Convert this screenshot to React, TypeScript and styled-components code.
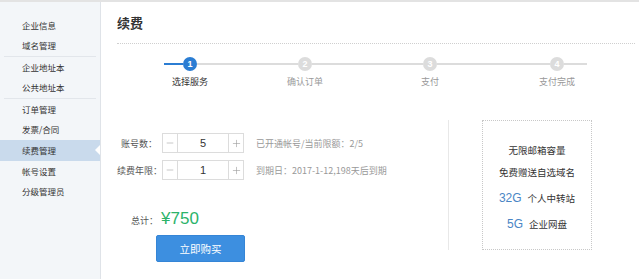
import { Fragment } from "react"
import styled, { createGlobalStyle } from "styled-components"
import { Minus, Plus } from "lucide-react"

const GlobalStyle = createGlobalStyle`
   body {
      margin: 0;
      background: #fff;
      color: #333;
      font-family: "Noto Sans CJK SC", "Noto Sans", sans-serif;
   }
   * { box-sizing: border-box; }
`

const Page = styled.div`
   display: flex;
   width: 639px;
   height: 279px;
   border-top: 2px solid #e3e3e3;
`

const Sidebar = styled.nav`
   flex: none;
   width: 101px;
   padding-top: 12.5px;
   background: #f3f6f9;
   border-right: 1px solid #dfe3e8;
`

const NavItem = styled.div<{ $active?: boolean }>`
   position: relative;
   height: 20.6px;
   line-height: 20.6px;
   padding-left: 22px;
   font-size: 8.5px;
   color: #333;
   background: ${({ $active }) => ($active ? "#c9daec" : "transparent")};
   &::after {
      content: "";
      display: ${({ $active }) => ($active ? "block" : "none")};
      position: absolute;
      right: 0;
      top: 5px;
      border-style: solid;
      border-width: 5px 5px 5px 0;
      border-color: transparent #fff transparent transparent;
   }
`

const NavDivider = styled.div`
   height: 1px;
   margin: 0 4px;
   background: #e2e6eb;
`

const Main = styled.main`
   flex: 1;
   padding: 0 4px 0 16px;
`

const Header = styled.h1`
   margin: 0;
   height: 42px;
   display: flex;
   align-items: center;
   font-size: 13px;
   font-weight: bold;
   color: #333;
   border-bottom: 1px dotted #cfcfcf;
`

const Steps = styled.div`
   display: flex;
   align-items: flex-start;
   margin: 13px 0 0 47px;
   height: 31px;
`

const Segment = styled.div<{ $w: number; $done?: boolean }>`
   flex: none;
   width: ${({ $w }) => $w}px;
   height: 2px;
   margin-top: 6px;
   background: ${({ $done }) => ($done ? "#2b7dd3" : "#dcdcdc")};
`

const Step = styled.div`
   flex: none;
   width: 14px;
   display: flex;
   flex-direction: column;
   align-items: center;
`

const Circle = styled.div<{ $done?: boolean }>`
   width: 14px;
   height: 14px;
   border-radius: 50%;
   background: ${({ $done }) => ($done ? "#2b7dd3" : "#dcdcdc")};
   color: #fff;
   font-family: "Liberation Sans", Arial, sans-serif;
   font-size: 9px;
   font-weight: bold;
   line-height: 14px;
   text-align: center;
`

const StepLabel = styled.div<{ $done?: boolean }>`
   margin-top: 5px;
   font-size: 9px;
   line-height: 12px;
   white-space: nowrap;
   color: ${({ $done }) => ($done ? "#333" : "#999")};
`

const Body = styled.div`
   display: flex;
   margin-top: 32px;
`

const FormArea = styled.div`
   flex: none;
   width: 331px;
   padding-top: 13px;
`

const FormRow = styled.div`
   display: flex;
   align-items: center;
   height: 20px;
   margin-bottom: 7px;
`

const Label = styled.span`
   width: 40px;
   margin-right: 5px;
   text-align: right;
   white-space: nowrap;
   font-size: 9px;
   color: #555;
`

const Stepper = styled.div`
   display: flex;
   width: 82px;
   height: 20px;
   border: 1px solid #dcdcdc;
`

const StepBtn = styled.div<{ $side: "left" | "right" }>`
   width: 15px;
   display: flex;
   align-items: center;
   justify-content: center;
   color: #999;
   ${({ $side }) => ($side === "left" ? "border-right" : "border-left")}: 1px solid #dcdcdc;
`

const Value = styled.div`
   flex: 1;
   text-align: center;
   line-height: 18px;
   font-family: "Liberation Sans", Arial, sans-serif;
   font-size: 11px;
   color: #333;
`

const Hint = styled.span`
   margin-left: 12px;
   font-size: 9px;
   color: #999;
   white-space: nowrap;
`

const TotalRow = styled.div`
   display: flex;
   align-items: baseline;
   margin-top: 28px;
   padding-left: 14px;
   height: 22px;
   line-height: 22px;
`

const TotalLabel = styled.span`
   font-size: 9px;
   color: #555;
   margin-right: 3px;
`

const Price = styled.span`
   font-family: "Liberation Sans", Arial, sans-serif;
   font-size: 17px;
   color: #2cb36a;
`

const BuyButton = styled.button`
   display: block;
   width: 89px;
   height: 27px;
   margin: 5px 0 0 39px;
   border: 1px solid #3585d6;
   border-radius: 2px;
   background: #3d8fe0;
   color: #fff;
   font-family: "Noto Sans CJK SC", sans-serif;
   font-size: 10.5px;
`

const InfoPanel = styled.div`
   height: 130px;
   padding-left: 33px;
   border-left: 1px solid #e8e8e8;
`

const InfoBox = styled.div`
   width: 110px;
   height: 130px;
   padding-top: 18px;
   border: 1px dotted #c8c8c8;
   display: flex;
   flex-direction: column;
   align-items: center;
`

const InfoLine = styled.div`
   height: 22px;
   line-height: 22px;
   font-size: 9.5px;
   color: #333;
`

const Feature = styled.div<{ $first?: boolean }>`
   height: 26px;
   line-height: 26px;
   margin-top: ${({ $first }) => ($first ? 2 : 0)}px;
   font-size: 9.5px;
   color: #333;
   white-space: nowrap;
`

const Size = styled.span`
   margin-right: 6px;
   font-family: "Liberation Sans", Arial, sans-serif;
   font-size: 12px;
   color: #4a86c5;
`

const navGroups = [
   ["企业信息", "域名管理"],
   ["企业地址本", "公共地址本"],
   ["订单管理", "发票/合同", "续费管理", "帐号设置", "分级管理员"],
]

const steps = [
   { n: 1, label: "选择服务", gap: 101 },
   { n: 2, label: "确认订单", gap: 111 },
   { n: 3, label: "支付", gap: 113 },
   { n: 4, label: "支付完成", gap: 23 },
]

const Counter = ({ value }: { value: number }) => (
   <Stepper>
      <StepBtn $side="left"><Minus size={10} strokeWidth={1.3} /></StepBtn>
      <Value>{value}</Value>
      <StepBtn $side="right"><Plus size={11} strokeWidth={1.3} /></StepBtn>
   </Stepper>
)

export default function App() {
   return (
      <>
         <GlobalStyle />
         <Page>
            <Sidebar>
               {navGroups.map((group, gi) => (
                  <div key={gi}>
                     {gi > 0 && <NavDivider />}
                     {group.map((item) => (
                        <NavItem key={item} $active={item === "续费管理"}>{item}</NavItem>
                     ))}
                  </div>
               ))}
            </Sidebar>
            <Main>
               <Header>续费</Header>
               <Steps>
                  <Segment $w={19} $done />
                  {steps.map((s) => (
                     <Fragment key={s.n}>
                        <Step>
                           <Circle $done={s.n === 1}>{s.n}</Circle>
                           <StepLabel $done={s.n === 1}>{s.label}</StepLabel>
                        </Step>
                        <Segment $w={s.gap} />
                     </Fragment>
                  ))}
               </Steps>
               <Body>
                  <FormArea>
                     <FormRow>
                        <Label>账号数：</Label>
                        <Counter value={5} />
                        <Hint>已开通帐号/当前限额：2/5</Hint>
                     </FormRow>
                     <FormRow>
                        <Label>续费年限：</Label>
                        <Counter value={1} />
                        <Hint>到期日：2017-1-12,198天后到期</Hint>
                     </FormRow>
                     <TotalRow>
                        <TotalLabel>总计：</TotalLabel>
                        <Price>¥750</Price>
                     </TotalRow>
                     <BuyButton>立即购买</BuyButton>
                  </FormArea>
                  <InfoPanel>
                     <InfoBox>
                        <InfoLine>无限邮箱容量</InfoLine>
                        <InfoLine>免费赠送自选域名</InfoLine>
                        <Feature $first><Size>32G</Size>个人中转站</Feature>
                        <Feature><Size>5G</Size>企业网盘</Feature>
                     </InfoBox>
                  </InfoPanel>
               </Body>
            </Main>
         </Page>
      </>
   )
}
